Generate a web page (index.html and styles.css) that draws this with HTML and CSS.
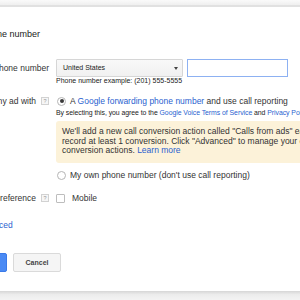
FILE: index.html
```html
<!DOCTYPE html>
<html lang="en">
<head>
    <meta charset="UTF-8">
    <meta name="viewport" content="width=device-width, initial-scale=1.0">
    <title>Phone number</title>
    <link rel="stylesheet" href="styles.css">
</head>
<body>

    <div class="topbar"></div>

    <div class="dialog">
        <h1 class="title">Phone number</h1>

        <div class="row row-phone">
            <div class="label">Phone number</div>
            <div class="field">
                <div class="phone-inputs">
                    <div class="select">United States<span class="caret"></span></div>
                    <div class="input"></div>
                </div>
                <div class="hint">Phone number example: (201) 555-5555</div>
            </div>
        </div>

        <div class="row row-show">
            <div class="label">Show my ad with <span class="help">?</span></div>
            <div class="field">
                <div class="option"><span class="radio checked"></span><span>A <a href="#">Google forwarding phone number</a> and use call reporting</span></div>
                <div class="terms">By selecting this, you agree to the <a href="#">Google Voice Terms of Service</a> and <a href="#">Privacy Policy</a></div>
                <div class="notice">
                    We'll add a new call conversion action called "Calls from ads" each time a call lasts long enough to<br>
                    record at least 1 conversion. Click "Advanced" to manage your call settings and<br>
                    conversion actions. <a href="#">Learn more</a>
                </div>
                <div class="option option-own"><span class="radio"></span><span>My own phone number (don't use call reporting)</span></div>
            </div>
        </div>

        <div class="row row-device">
            <div class="label">Device preference <span class="help">?</span></div>
            <div class="field">
                <div class="option"><span class="checkbox"></span><span>Mobile</span></div>
            </div>
        </div>

        <a class="advanced" href="#">Advanced</a>

        <div class="buttons">
            <button class="btn btn-save">Save</button>
            <button class="btn btn-cancel">Cancel</button>
        </div>
    </div>

    <div class="bottombar"></div>

</body>
</html>
```

FILE: styles.css
```css
body {
    margin: 0;
    width: 300px;
    height: 300px;
    overflow: hidden;
    font-family: "Liberation Sans", Arial, sans-serif;
    color: #333;
    background-color: #fff;
}

a {
    color: #2a5fcf;
    text-decoration: none;
}

.topbar {
    height: 5px;
    background: linear-gradient(#fafafa, #efefef);
    border-bottom: 2px solid #e1e1e1;
}

.dialog {
    margin-left: -40px;
    width: 400px;
    height: 284px;
    box-sizing: border-box;
    padding-top: 21px;
}

.title {
    margin: 0 0 19px 21px;
    font-size: 9px;
    line-height: 12px;
    font-weight: normal;
    color: #222;
}

.row {
    display: flex;
    gap: 7px;
}

.label {
    width: 89px;
    flex: none;
    font-size: 8.5px;
    line-height: 10px;
    color: #333;
    text-align: right;
    white-space: nowrap;
    display: flex;
    justify-content: flex-end;
    align-items: center;
    gap: 5px;
    height: 10px;
}

.field {
    flex: 1;
    font-size: 8.5px;
    line-height: 10px;
    white-space: nowrap;
}

.row-phone .label {
    margin-top: 4px;
}

.phone-inputs {
    display: flex;
    gap: 4px;
}

.select {
    width: 127px;
    height: 18px;
    box-sizing: border-box;
    border: 1px solid #d6d6d6;
    border-radius: 1px;
    background: linear-gradient(#f9f9f9, #f1f1f1);
    font-size: 7px;
    line-height: 16px;
    color: #222;
    padding-left: 6px;
    display: flex;
    justify-content: space-between;
    align-items: center;
    padding-right: 4px;
}

.caret {
    width: 0;
    height: 0;
    border-left: 2.5px solid transparent;
    border-right: 2.5px solid transparent;
    border-top: 3px solid #444;
}

.input {
    width: 101px;
    height: 18px;
    box-sizing: border-box;
    border: 1px solid #8db1f2;
    background-color: #fff;
}

.hint {
    font-size: 7px;
    line-height: 8px;
    color: #222;
}

.row-show {
    margin-top: 11px;
}

.help {
    width: 8px;
    height: 8px;
    box-sizing: border-box;
    border: 1px solid #d2d2d2;
    background-color: #f6f6f6;
    color: #999;
    font-size: 5.5px;
    line-height: 6px;
    text-align: center;
    flex: none;
}

.option {
    display: flex;
    align-items: center;
    color: #333;
    height: 10px;
}

.radio {
    width: 9px;
    height: 9px;
    box-sizing: border-box;
    border: 1px solid #b5b5b5;
    border-radius: 50%;
    background-color: #fff;
    margin-left: 1px;
    margin-right: 4px;
    display: flex;
    align-items: center;
    justify-content: center;
    flex: none;
}

.radio.checked::after {
    content: "";
    width: 4px;
    height: 4px;
    border-radius: 50%;
    background-color: #3a3a3a;
}

.terms {
    margin-top: 3px;
    font-size: 6.9px;
    line-height: 8px;
    color: #222;
    letter-spacing: -0.05px;
}

.notice {
    margin-top: 4px;
    height: 42px;
    box-sizing: border-box;
    padding: 6px 6px 0 6px;
    background-color: #fcf2d9;
    border-radius: 3px;
    line-height: 9.7px;
    color: #333;
}

.option-own {
    margin-top: 7px;
}

.row-device {
    margin-top: 13px;
}

.checkbox {
    width: 9px;
    height: 9px;
    box-sizing: border-box;
    border: 1px solid #bdbdbd;
    border-radius: 1px;
    background-color: #fff;
    margin-right: 7px;
    flex: none;
}

.advanced {
    display: block;
    margin: 17px 0 0 15px;
    font-size: 8.5px;
    line-height: 10px;
}

.buttons {
    margin: 23px 0 0 15px;
    display: flex;
    gap: 6px;
}

.btn {
    height: 19px;
    border-radius: 2px;
    font-family: "Liberation Sans", Arial, sans-serif;
    font-size: 7px;
    font-weight: bold;
    padding: 0;
}

.btn-save {
    width: 32px;
    background-color: #4a8af4;
    border: 1px solid #3b7ae8;
    color: #fff;
}

.btn-cancel {
    width: 48px;
    background-color: #f5f5f5;
    border: 1px solid #dadada;
    color: #444;
}

.bottombar {
    height: 9px;
    background: linear-gradient(#d6d6d6, #ececec 40%, #f3f3f3);
}
```
